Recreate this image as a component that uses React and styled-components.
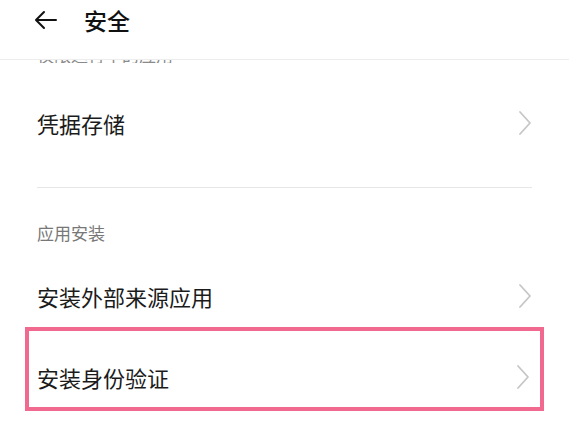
import React from "react";
import styled, { createGlobalStyle } from "styled-components";

const Global = createGlobalStyle`
  html, body { margin: 0; padding: 0; background: #fff; }
  body {
    font-family: "Noto Sans CJK SC", "Noto Sans", sans-serif;
    color: #1a1a1a;
    width: 569px;
    height: 427px;
    overflow: hidden;
  }
`;

const Page = styled.div`
  width: 569px;
  height: 427px;
  display: flex;
  flex-direction: column;
  background: #fff;
  overflow: hidden;
`;

const Header = styled.header`
  height: 59px;
  flex: none;
  display: flex;
  align-items: flex-start;
  padding: 6px 0 0 33px;
  box-sizing: content-box;
  height: 53px;
  border-bottom: 1px solid #ededed;
  background: #fff;
`;

const BackButton = styled.span`
  width: 26px;
  height: 28px;
  display: flex;
  align-items: center;
  justify-content: center;
`;

const Title = styled.h1`
  margin: 0 0 0 25px;
  font-size: 23px;
  font-weight: 500;
  line-height: 28px;
  color: #111;
`;

const ClipLine = styled.div`
  height: 3px;
  flex: none;
  overflow: hidden;
  display: flex;
  align-items: flex-end;
  padding-left: 37px;
`;

const ClipText = styled.span`
  font-size: 17px;
  line-height: 16px;
  color: #8a8a8a;
  white-space: nowrap;
`;

const Row = styled.div`
  flex: none;
  height: ${(p) => p.$h}px;
  padding: ${(p) => p.$top}px ${(p) => p.$right ?? 37}px 0 ${(p) => p.$left ?? 37}px;
  box-sizing: border-box;
  display: flex;
  align-items: flex-start;
  justify-content: space-between;
`;

const RowLabel = styled.span`
  font-size: 22px;
  line-height: 28px;
  color: #1b1b1b;
`;

const Chevron = styled.svg`
  width: 14px;
  height: 26px;
  flex: none;
  margin-top: 1px;
`;

const Divider = styled.div`
  flex: none;
  height: 1px;
  margin: 0 37px;
  background: #e6e6e6;
`;

const SectionLabel = styled.div`
  flex: none;
  height: 69px;
  box-sizing: border-box;
  padding: 35px 0 0 37px;
  font-size: 17px;
  line-height: 20px;
  color: #777;
`;

const Highlight = styled.div`
  flex: none;
  height: 84px;
  margin: 0 25px;
  box-sizing: border-box;
  border: 4px solid #f2698f;
`;

const Arrow = () => (
  <svg width="24" height="20" viewBox="0 0 24 20" fill="none">
    <path
      d="M22 10H3M10 2L2 10L10 18"
      stroke="#111"
      strokeWidth="2"
      strokeLinecap="round"
      strokeLinejoin="round"
    />
  </svg>
);

const Chev = () => (
  <Chevron viewBox="0 0 14 26" fill="none">
    <path d="M2 2L12 13L2 24" stroke="#c6c6c6" strokeWidth="1.8" strokeLinecap="round" strokeLinejoin="round" />
  </Chevron>
);

export default function App() {
  return (
    <>
      <Global />
      <Page>
        <Header>
          <BackButton>
            <Arrow />
          </BackButton>
          <Title>安全</Title>
        </Header>
        <ClipLine>
          <ClipText>仅限运行中的应用</ClipText>
        </ClipLine>
        <Row $h={124} $top={46}>
          <RowLabel>凭据存储</RowLabel>
          <Chev />
        </Row>
        <Divider />
        <SectionLabel>应用安装</SectionLabel>
        <Row $h={70} $top={25}>
          <RowLabel>安装外部来源应用</RowLabel>
          <Chev />
        </Row>
        <Highlight>
          <Row $h={76} $top={32} $left={8} $right={10}>
            <RowLabel>安装身份验证</RowLabel>
            <Chev />
          </Row>
        </Highlight>
      </Page>
    </>
  );
}
